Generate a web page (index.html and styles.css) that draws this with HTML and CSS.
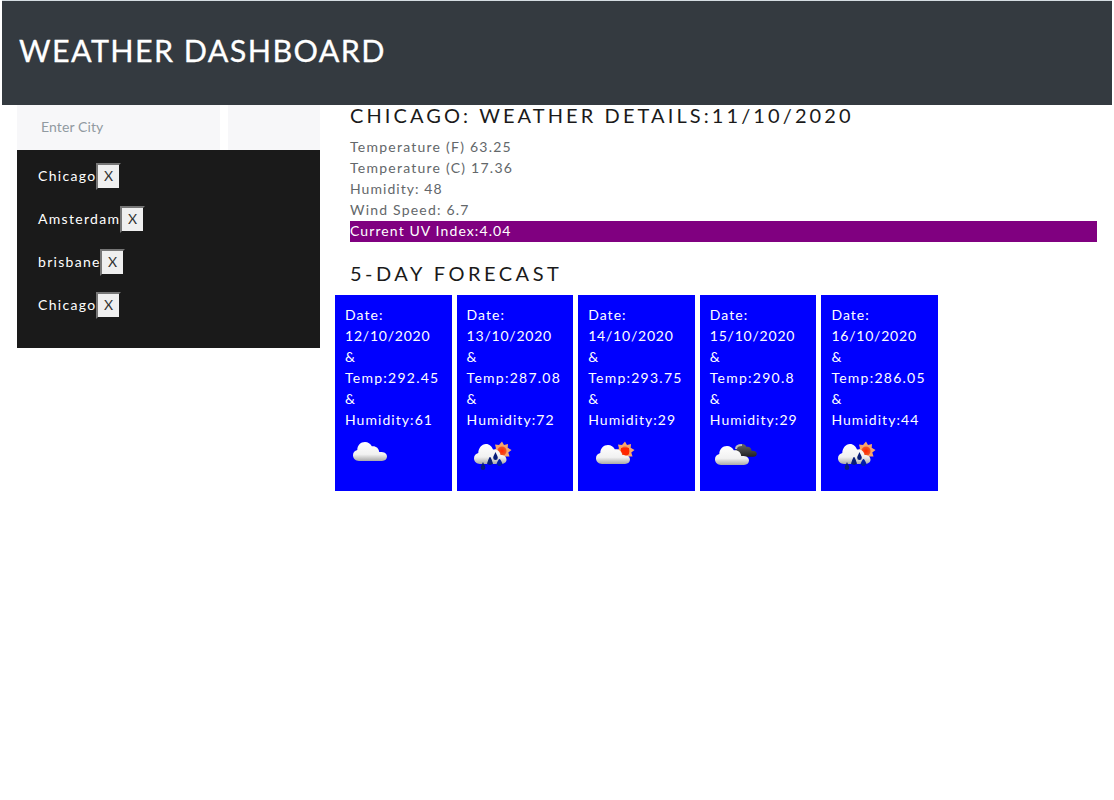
FILE: index.html
```html
<!DOCTYPE html>
<html lang="en">
<head>
<meta charset="utf-8">
<title>Weather Dashboard</title>
<link rel="stylesheet" href="styles.css">
</head>
<body>
<svg class="defs" width="0" height="0" aria-hidden="true">
  <defs>
    <linearGradient id="white" x1="0" y1="0" x2="0" y2="1"><stop offset="0" stop-color="#fff"/><stop offset=".65" stop-color="#f1f1f1"/><stop offset="1" stop-color="#aaa"/></linearGradient>
    <linearGradient id="dark" x1="0" y1="0" x2="0" y2="1"><stop offset="0" stop-color="#666"/><stop offset="1" stop-color="#222"/></linearGradient>
    <radialGradient id="red"><stop offset="0" stop-color="#ff2600"/><stop offset="1" stop-color="#f05a28"/></radialGradient>
    <path id="cloud" d="M6 19C2.500 19 0 16.500 0 13.300 0 10.500 1.800 8.500 4.300 8 4.300 3.500 7.500 0 12 0 15 0 17.500 1.700 18.800 4.300 22.500 3.600 26 6 26.200 10 30.500 9.700 34 11 34 14.600 34 17.200 32 19 29 19Z"/>
    <g id="sun">
      <path fill="#f7a56b" d="M0-9.500 2-6 6-7 5.700-3.300 9.500-1 6.300 1.500 7.500 5.500 3.500 5.600 1 9-1.700 6-6 7-5.800 3-9 0-6 -2.500-7-6.500-3-6Z"/>
      <circle r="4.600" fill="url(#red)"/>
    </g>
    <path id="drop" d="M0-4C1-1.500 2.300 0 2.300 1.800A2.300 2.300 0 0 1-2.300 1.800C-2.300 0-1-1.500 0-4Z"/>
    <g id="rain">
      <use href="#sun" x="35" y="20"/>
      <path d="M13 33C9.500 33 7 30.500 7 27.300 7 24.500 9 22.500 11.300 22 11.300 17.500 14.500 13 19 13 22.500 13 25 15.500 26 18.500 30 18 33 20 33.500 24 37 24 39.500 26 39.500 28.800 39.500 31.500 37 33 34 33Z" fill="url(#white)"/>
      <g fill="#071c78"><use href="#drop" x="16" y="35"/><use href="#drop" x="23" y="30"/><path d="M20 33q2-7 3-7t3 7Z"/><use href="#drop" x="28.500" y="25"/><path d="M29.500 33q2-5 3-5t3 5l-2 2h-2Z" fill="#001da8"/></g>
    </g>
  </defs>
</svg>
<header class="header"><h1 class="title">WEATHER DASHBOARD</h1></header>
<main class="main">
  <aside class="side">
    <form class="search">
      <input class="city-input" type="text" placeholder="Enter City">
      <button class="search-button" type="button" aria-label="Search"></button>
    </form>
    <ul class="cities">
      <li class="city"><span class="name chicago">Chicago</span><button class="remove">X</button></li>
      <li class="city"><span class="name amsterdam">Amsterdam</span><button class="remove">X</button></li>
      <li class="city"><span class="name brisbane">brisbane</span><button class="remove">X</button></li>
      <li class="city"><span class="name chicago">Chicago</span><button class="remove">X</button></li>
    </ul>
  </aside>
  <section class="content">
    <h2 class="heading">CHICAGO: WEATHER DETAILS:11/10/2020</h2>
    <div class="details">
      <div class="temperature">Temperature (F) 63.25</div>
      <div class="temperature">Temperature (C) 17.36</div>
      <div>Humidity: 48</div>
      <div class="wind">Wind Speed: 6.7</div>
      <div class="uv">Current UV Index:4.04</div>
    </div>
    <h2 class="heading forecast-heading">5-DAY FORECAST</h2>
    <div class="forecast">
      <article class="card"><div>Date:</div><div class="date">12/10/2020</div><div>&amp;</div><div class="temp">Temp:292.45</div><div>&amp;</div><div>Humidity:61</div>
        <svg class="icon" viewBox="0 0 50 50"><use href="#cloud" x="8" y="11" fill="url(#white)"/></svg></article>
      <article class="card"><div>Date:</div><div class="date">13/10/2020</div><div>&amp;</div><div class="temp">Temp:287.08</div><div>&amp;</div><div>Humidity:72</div>
        <svg class="icon" viewBox="0 0 50 50"><use href="#rain"/></svg></article>
      <article class="card"><div>Date:</div><div class="date">14/10/2020</div><div>&amp;</div><div class="temp">Temp:293.75</div><div>&amp;</div><div>Humidity:29</div>
        <svg class="icon" viewBox="0 0 50 50"><use href="#sun" x="37" y="20"/><use href="#cloud" x="8" y="14" fill="url(#white)"/><path d="M33 17h8v6c-2 2-4 2-6 0l-2-3Z" fill="#ff2600"/></svg></article>
      <article class="card"><div>Date:</div><div class="date">15/10/2020</div><div>&amp;</div><div class="temp">Temp:290.8</div><div>&amp;</div><div>Humidity:29</div>
        <svg class="icon" viewBox="0 0 50 50"><use href="#cloud" transform="translate(24 13) scale(.67)" fill="url(#dark)"/><path d="M26 18q0-4 6-4" fill="none" stroke="#bbb" stroke-width="2"/><use href="#cloud" transform="translate(5 15)" fill="url(#white)"/></svg></article>
      <article class="card"><div>Date:</div><div class="date">16/10/2020</div><div>&amp;</div><div class="temp">Temp:286.05</div><div>&amp;</div><div>Humidity:44</div>
        <svg class="icon" viewBox="0 0 50 50"><use href="#rain"/></svg></article>
    </div>
  </section>
</main>
</body>
</html>
```
FILE: styles.css
```css
* { box-sizing: border-box; }
body { margin: 0; background: #fff; color: #55595c; font: 14px/21px Lato, "Open Sans", sans-serif; overflow: hidden; }
.defs { display: block; height: 0; }
.header { height: 105px; margin: 0 2px; padding: 31px 17px 0; border-top: 1px solid #d5dde2; background: #343a40; }
.title { margin: 0; color: #fff; font-size: 30.500px; line-height: 37px; font-weight: 400; letter-spacing: 1.400px; -webkit-text-stroke: .3px #fff; }
.main { display: flex; gap: 15px; padding: 0 17px; }
.side { width: 303px; flex: none; }
.search { display: flex; gap: 8px; height: 45px; }
.city-input { width: 203px; height: 45px; border: 0; padding: 0 24px 2px; background: #f7f7f9; font: 14px Lato, sans-serif; letter-spacing: .1px; }
.city-input::placeholder { color: #919aa1; opacity: 1; }
.search-button { flex: 1; border: 0; background: #f7f7f9; }
.cities { list-style: none; margin: 0; height: 198px; padding: 11px 21px; background: #1a1a1a; color: #fff; }
.city { display: flex; align-items: center; height: 30px; margin-bottom: 13px; }
.name { padding-bottom: 2px; letter-spacing: 1.300px; }
.chicago { width: 58px; }
.amsterdam { width: 82px; }
.brisbane { width: 62px; }
.remove { width: 25px; height: 27px; padding: 0 0 2px; border: 2px solid #767676; border-right-color: #1a1a1a; border-bottom-color: #1a1a1a; background: #efefef; color: #333; font: 14px/21px Lato, sans-serif; }
.content { flex: 1; }
.heading { height: 24px; margin: 0; padding: 0 0 0 15px; color: #1a1a1a; font-size: 20px; line-height: 21px; font-weight: 400; letter-spacing: 3.100px; }
.details { margin: 7px 0 0 15px; color: #63676a; letter-spacing: 1.050px; }
.temperature { letter-spacing: 1.240px; }
.wind { letter-spacing: 1.200px; }
.uv { height: 21px; margin-top: 1px; background: purple; color: #fff; line-height: 19px; letter-spacing: 1.100px; }
.forecast-heading { margin-top: 20px; line-height: 22px; letter-spacing: 3.500px; }
.forecast { display: flex; gap: 5px; width: 603px; margin-top: 9px; }
.card { flex: 1; height: 196px; padding: 9px 0 0 10px; background: #00f; color: #fff; letter-spacing: 1.050px; white-space: nowrap; }
.date { letter-spacing: .780px; }
.temp { letter-spacing: 1.250px; }
.icon { display: block; width: 50px; height: 50px; margin-top: 1px; }
```
